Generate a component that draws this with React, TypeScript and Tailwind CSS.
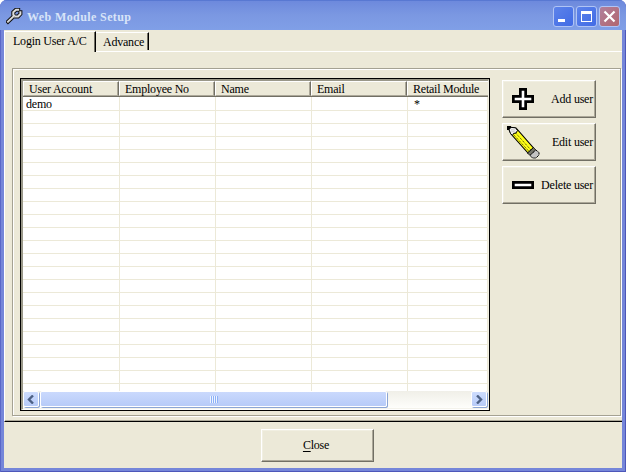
import React from "react";

const serif = "font-['Liberation_Serif',serif]";

function Label({ text, className = "" }: { text: string; className?: string }) {
  return (
    <span className={`block shrink-0 leading-[16px] tracking-[-0.22px] whitespace-nowrap ${className}`}>{text}</span>
  );
}

function Wrench() {
  const jaw = "M2 13.7L8 8M12.2 1.7H10L7.3 4.2V6.8L9 8.5H12L14.4 6V4.2";
  return (
    <svg width="17" height="17" viewBox="0 0 17 17" className="mt-[2px]">
      <path d={jaw} stroke="#111" strokeWidth="4" strokeLinecap="square" fill="none" />
      <path d={jaw} stroke="#dcdcdc" strokeWidth="2" strokeLinecap="square" fill="none" />
      <path d="M2.2 14.6L8.6 8.6" stroke="#8a8a8a" strokeWidth="0.8" />
    </svg>
  );
}

function PlusIcon() {
  return (
    <svg width="22" height="22" viewBox="0 0 22 22">
      <path d="M7 0h8v7h7v8h-7v7h-8v-7h-7v-8h7z" fill="#000" />
      <path d="M9.7 2.7h2.6v7h7v2.6h-7v7h-2.6v-7h-7v-2.6h7z" fill="#fff" />
    </svg>
  );
}

function MinusIcon() {
  return (
    <svg width="22" height="8" viewBox="0 0 22 8">
      <path d="M0 0h22v8h-22z" fill="#000" />
      <path d="M2.7 2.7h16.6v2.6h-16.6z" fill="#fff" />
    </svg>
  );
}

function PencilIcon() {
  return (
    <svg width="33" height="33" viewBox="0 0 33 33">
      <path d="M1 1L9 2L26.5 22L21 27L4 8z" fill="#ffff18" stroke="#000" strokeWidth="1.1" />
      <path d="M1 1L8.5 1.8L10.5 4.5L9 7L6.5 7.5L5.5 9.5L3.5 7.5z" fill="#eee" stroke="#000" strokeWidth="1" />
      <path d="M4.5 3.5l3 .5M4.5 5l3 1" stroke="#999" strokeWidth="0.7" strokeDasharray="1 1" />
      <path d="M6.8 8.9L22.3 25.7M8.8 7.2L24.2 24.3" stroke="#000" strokeWidth="0.7" strokeDasharray="1.2 0.9" />
      <path d="M20.5 27L26.5 21.5L28.8 24L23 29.5z" fill="#75756a" stroke="#000" strokeWidth="0.8" />
      <path d="M23 29.5L28.8 24L32 26.5V29L29 32H25.5z" fill="#c3c3c3" stroke="#000" strokeWidth="1" strokeDasharray="1.5 0.5" />
      <path d="M0 0h4v2l-2 2h-2z" fill="#000" />
    </svg>
  );
}

const raised =
  "border border-t-white border-l-white border-r-[#716f64] border-b-[#716f64] shadow-[inset_-1px_-1px_0_#aca899,inset_1px_1px_0_#f1efe2]";

function CaptionButton({ kind }: { kind: "min" | "max" | "close" }) {
  return (
    <div
      className={`flex h-[21px] w-[21px] items-center justify-center rounded-[3px] border border-[#b0c4f5] ${
        kind === "close"
          ? "bg-linear-to-br from-[#b07f9c] to-[#b2666e]"
          : "bg-linear-to-br from-[#5d83ea] to-[#416be5]"
      }`}
    >
      <svg width="19" height="19" viewBox="0 0 19 19" shapeRendering={kind === "close" ? "auto" : "crispEdges"}>
        {kind === "min" && <path d="M4 12h7v3h-7z" fill="#fff" />}
        {kind === "max" && <path d="M4 4h11v11h-11zM5 7v7h9v-7z" fill="#fff" fillRule="evenodd" />}
        {kind === "close" && <path d="M4.5 4.5l10 10M14.5 4.5l-10 10" stroke="#fff" strokeWidth="2.2" />}
      </svg>
    </div>
  );
}

function ScrollButton({ dir }: { dir: "left" | "right" }) {
  return (
    <div className="flex h-[16px] w-[16px] items-center justify-center rounded-[2px] border border-white bg-linear-to-b from-[#cddcfd] to-[#b7cbf8] shadow-[1px_1px_0_#8ba5d5]">
      <svg width="8" height="9" viewBox="0 0 8 9">
        <path d={dir === "left" ? "M6 .5l-4 4 4 4" : "M2 .5l4 4-4 4"} stroke="#4d6185" strokeWidth="2.4" fill="none" />
      </svg>
    </div>
  );
}

const columns = ["User Account", "Employee No", "Name", "Email", "Retail Module"];

const rows = Array.from({ length: 23 }, (_, i) => (i === 0 ? ["demo", "", "", "", "*"] : ["", "", "", "", ""]));

function UserTable() {
  return (
    <div className="flex h-[333px] w-[470px] shrink-0 flex-col border border-black bg-[#f4f3ec]">
      <div className="flex h-[331px] flex-col border-t-2 border-r border-b border-l-2 border-t-[#9a9889] border-r-[#f1efe2] border-b-white border-l-[#9a9889]">
        <div className="flex h-[16px] shrink-0 overflow-hidden border-b border-[#716f64] bg-[#ece9d8]">
          {columns.map((name, i) => (
            <div
              key={name}
              className={`h-[15px] shrink-0 border-t border-b border-l border-t-white border-b-[#aca899] border-l-white pl-[5px] ${
                i < 4 ? "w-[96px] border-r border-r-[#716f64] shadow-[inset_-1px_0_0_#aca899]" : "w-[81px]"
              }`}
            >
              <Label text={name} className="-mt-px" />
            </div>
          ))}
        </div>
        <div className="h-[294px] shrink-0 overflow-hidden bg-white">
          {rows.map((r, i) => (
            <div key={i} className={`flex border-b border-[#ece9d8] ${i === 0 ? "h-[14px]" : "h-[13px]"}`}>
              {r.map((cell, j) => (
                <div
                  key={j}
                  className={`shrink-0 border-r border-[#ece9d8] ${
                    j === 0 ? "w-[97px] pl-[3px]" : j === 4 ? "w-[80px] pl-[6px]" : "w-[96px]"
                  }`}
                >
                  {cell && <Label text={cell} className="-mt-px" />}
                </div>
              ))}
            </div>
          ))}
        </div>
        <div className="flex h-[17px] shrink-0 items-start bg-linear-to-b from-[#f0efe8] to-[#fefefb]">
          <ScrollButton dir="left" />
          <div className="ml-px flex h-[16px] w-[347px] items-center justify-center gap-px rounded-[2px] border border-white bg-linear-to-b from-[#cad9fd] to-[#b7cbf8] shadow-[1px_1px_0_#8ba5d5]">
            {[0, 1, 2, 3].map((n) => (
              <div key={n} className="h-[7px] w-px bg-[#eef4fe] shadow-[1px_0_0_#8cb0f8]" />
            ))}
          </div>
          <div className="ml-auto pr-px">
            <ScrollButton dir="right" />
          </div>
        </div>
      </div>
    </div>
  );
}

function ActionButton({ text, icon, iconBox }: { text: string; icon: React.ReactNode; iconBox: string }) {
  return (
    <button className={`flex h-[38px] w-[94px] items-center justify-between pr-[2px] ${raised}`}>
      <span className={`shrink-0 ${iconBox}`}>{icon}</span>
      <Label text={text} />
    </button>
  );
}

export default function App() {
  return (
    <div className="bg-white">
      <div
        className={`flex h-[472px] w-[626px] flex-col overflow-hidden rounded-t-[7px] bg-[#7586d9] text-[12px] text-black shadow-[inset_1px_0_0_#5a67c8,inset_-1px_-1px_0_#4d57b9] ${serif}`}
      >
        <header className="flex h-[30px] shrink-0 items-center bg-linear-to-b from-[#6c88dc] via-[#7b98e2] to-[#809fe7] pr-[6px] pl-[6px] shadow-[inset_0_1px_0_#5878d2]">
          <Wrench />
          <h1 className="mt-[4px] ml-[4px] leading-[16px] font-bold tracking-[0.4px] whitespace-nowrap text-[#d8e4f8]">
            Web Module Setup
          </h1>
          <div className="mt-[3px] ml-auto flex gap-[2px]">
            <CaptionButton kind="min" />
            <CaptionButton kind="max" />
            <CaptionButton kind="close" />
          </div>
        </header>
        <main className="mx-[4px] flex h-[438px] shrink-0 flex-col bg-[#ece9d8]">
          <nav className="flex h-[22px] shrink-0 items-end">
            <div className="h-[21px] w-[92px] border-t border-r border-l border-t-white border-r-black border-l-white pt-px pl-[8px] shadow-[inset_-1px_0_0_#716f64]">
              <Label text="Login User A/C" />
            </div>
            <div className="flex h-[20px] flex-1 border-b border-white">
              <div className="h-[18px] w-[53px] border-t border-r border-t-white border-r-black pt-px pl-[7px] shadow-[inset_-1px_0_0_#716f64]">
                <Label text="Advance" />
              </div>
            </div>
          </nav>
          <section className="h-[370px] shrink-0 border-b border-l border-b-black border-l-white pt-[16px] pl-[7px] shadow-[inset_0_-1px_0_#aca899]">
            <div className="h-[348px] w-[609px] border border-[#a5a293] shadow-[inset_1px_1px_0_#fff,1px_1px_0_#fff]">
              <div className="flex gap-[12px] pt-[9px] pl-[7px]">
                <UserTable />
                <div className="flex flex-col gap-[5px] pt-[2px]">
                  <ActionButton text="Add user" icon={<PlusIcon />} iconBox="pl-[9px]" />
                  <ActionButton text="Edit user" icon={<PencilIcon />} iconBox="pl-[4px]" />
                  <ActionButton text="Delete user" icon={<MinusIcon />} iconBox="pl-[9px]" />
                </div>
              </div>
            </div>
          </section>
          <footer className="flex justify-center pt-[7px] pl-[8px]">
            <button className={`h-[33px] w-[113px] pr-[2px] pb-[2px] text-center leading-[28px] tracking-[-0.25px] ${raised}`}>
              <span className="underline underline-offset-2">C</span>lose
            </button>
          </footer>
        </main>
      </div>
    </div>
  );
}
